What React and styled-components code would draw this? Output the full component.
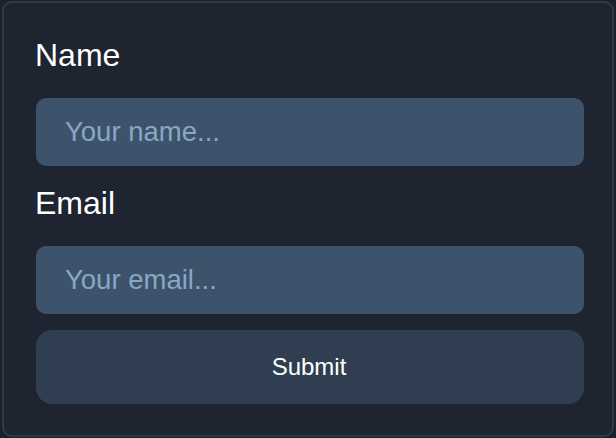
import React, { useState } from "react";
import styled, { createGlobalStyle } from "styled-components";

const GlobalStyle = createGlobalStyle`
  html, body {
    margin: 0;
    padding: 0;
    background: #1c222c;
  }
  #root {
    padding: 1px 2px;
    font-family: "Liberation Sans", Arial, sans-serif;
  }
`;

const Card = styled.form`
  box-sizing: border-box;
  width: 612px;
  height: 436px;
  display: flex;
  flex-direction: column;
  padding: 34px 30px 0 32px;
  background: #1e2430;
  border: 2px solid #2e3a47;
  border-radius: 10px;
`;

const Label = styled.label`
  font-size: 32px;
  color: #ffffff;
  margin-bottom: 24px;
  margin-left: -1px;
`;

const Input = styled.input`
  box-sizing: border-box;
  width: 548px;
  height: 68px;
  margin-bottom: ${(p) => p.$gap}px;
  padding: 0 29px;
  border: none;
  border-radius: 10px;
  background: #3d536b;
  color: #ffffff;
  font-family: inherit;
  font-size: 27.5px;
  outline: none;

  &::placeholder {
    color: #8aa6c6;
  }
`;

const SubmitButton = styled.button`
  box-sizing: border-box;
  width: 548px;
  height: 74px;
  padding: 0 2px 0 0;
  border: none;
  border-radius: 16px;
  background: #2f3f51;
  color: #ffffff;
  font-family: inherit;
  font-size: 24px;
  cursor: pointer;
`;

export default function App() {
  const [name, setName] = useState("");
  const [email, setEmail] = useState("");

  return (
    <>
      <GlobalStyle />
      <Card onSubmit={(e) => e.preventDefault()}>
        <Label htmlFor="name">Name</Label>
        <Input
          id="name"
          $gap={19}
          placeholder="Your name..."
          value={name}
          onChange={(e) => setName(e.target.value)}
        />
        <Label htmlFor="email">Email</Label>
        <Input
          id="email"
          $gap={16}
          placeholder="Your email..."
          value={email}
          onChange={(e) => setEmail(e.target.value)}
        />
        <SubmitButton type="submit">Submit</SubmitButton>
      </Card>
    </>
  );
}
